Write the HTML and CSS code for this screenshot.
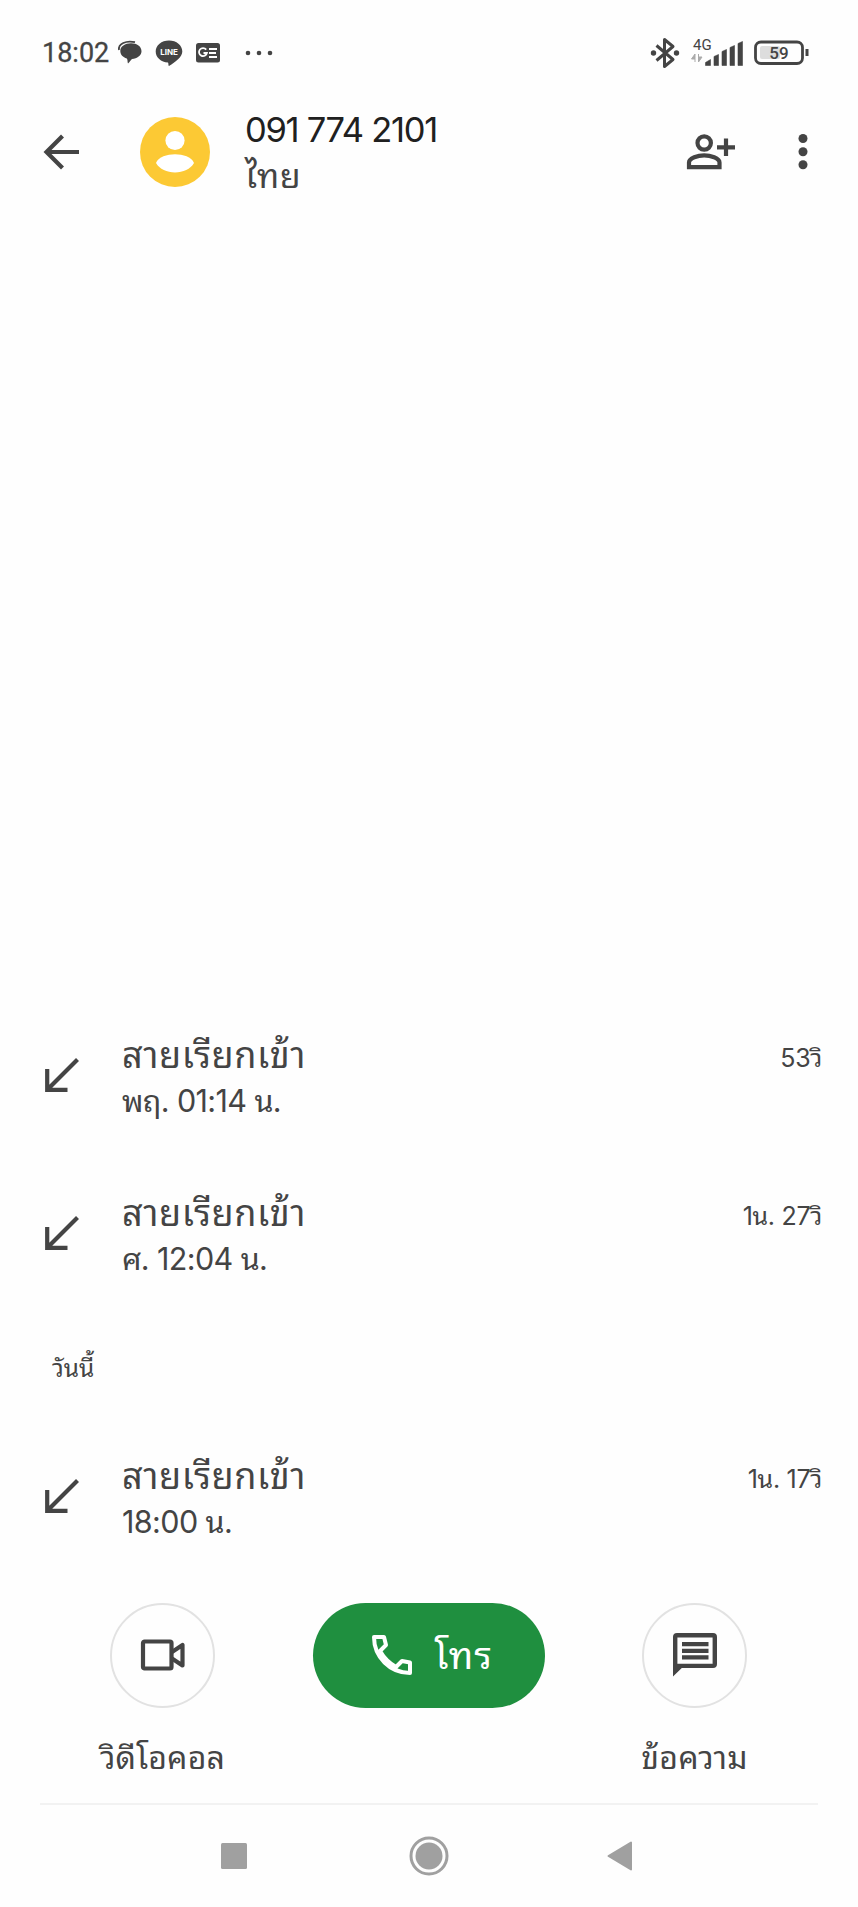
FILE: index.html
```html
<!DOCTYPE html>
<html lang="th">
<head>
<meta charset="utf-8">
<title>091 774 2101</title>
<link rel="stylesheet" href="styles.css">
</head>
<body>
<div class="status">
  <span class="clock">18:02</span>
  <svg class="s-chat" width="24" height="24" viewBox="0 0 24 24"><path d="M1 9C0 3 8-1 17 1.200" fill="none" stroke="#444" stroke-width="1.800"/><path d="M13 2.300C19 2.300 23.500 5.500 23.500 10.300C23.500 14.500 19 17.500 14 18C12.500 19 12 21 10 22.500C9.200 20.500 10 19 8.800 17.400C5 16.500 2.300 13.500 2.300 10C2.300 5.500 7 2.300 13 2.300Z" fill="#444"/></svg>
  <svg class="s-line" width="28" height="28" viewBox="0 0 28 28"><path d="M14 1.500C21.500 1.500 27.300 6.400 27.300 12.500C27.300 18 20.500 23 14 27C13 27 13.800 24.500 13 23.600C6 23.100 .7 18.500 .7 12.500C.7 6.400 6.500 1.500 14 1.500Z" fill="#444"/><text class="line-word" x="14" y="15.500" text-anchor="middle">LINE</text></svg>
  <svg class="s-news" width="24" height="20" viewBox="0 0 24 20"><rect width="24" height="19.500" rx="2.500" fill="#444"/><path d="M10.200 6.600A4 4 0 1 0 10.900 10H7.500M13 6h8M13 10h7M13 14h8" fill="none" stroke="#fff" stroke-width="1.800"/></svg>
  <svg class="s-more" width="28" height="6" viewBox="0 0 28 6" fill="#444"><circle cx="3" cy="3" r="2.300"/><circle cx="14" cy="3" r="2.300"/><circle cx="25" cy="3" r="2.300"/></svg>
  <svg class="s-bt" width="28" height="32" viewBox="0 0 28 32"><path d="M5.500 8.500L22 22.500L13.500 29.500V2.500L22 9.500L5.500 23.500" fill="none" stroke="#444" stroke-width="3" stroke-linejoin="round"/><circle cx="2.500" cy="16" r="2.700" fill="#444"/><circle cx="25.500" cy="16" r="2.700" fill="#444"/></svg>
  <svg class="s-signal" width="54" height="32" viewBox="0 0 54 32"><text class="net" x="3" y="13">4G</text><path d="M5 25v-8l-3.500 5h3.500M8.500 17v8l3.500-5h-3.500" fill="#aaa" stroke="#aaa" stroke-width="1"/><path d="M15.500 28.500V25.500l5-3v6zM24 28.500V19.500l4.500-2v11zM32 28.500V14.500l4.500-2v16zM40 28.500V10.500l4.500-2v20zM48 28.500V6.500l4.500-2v24z" fill="#444" stroke="#444" stroke-width=".6" stroke-linejoin="round"/></svg>
  <svg class="s-batt" width="56" height="26" viewBox="0 0 56 26"><rect x="6" y="6" width="20" height="13" rx="2" fill="#ddd"/><rect x="1.500" y="2" width="47" height="21.500" rx="5.500" fill="none" stroke="#444" stroke-width="2.800"/><path d="M53 9v7" stroke="#444" stroke-width="3"/><text class="batt-num" x="25" y="19" text-anchor="middle">59</text></svg>
</div>

<header class="head">
  <svg class="back" width="36" height="36" viewBox="0 0 36 36"><path d="M35 18H3M18.500 2L2.500 18l16 16" fill="none" stroke="#444" stroke-width="4.200"/></svg>
  <svg class="avatar" width="70" height="70" viewBox="0 0 70 70"><circle cx="35" cy="35" r="35" fill="#fcc934"/><circle cx="35" cy="23.500" r="9.600" fill="#fff"/><path d="M16 46C18.500 40 27 37.300 35 37.300S51.500 40 54 46C50.500 52 43 55.500 35 55.500S19.500 52 16 46Z" fill="#fff"/></svg>
  <div class="who"><div class="number">091 774 2101</div><div class="country">ไทย</div></div>
  <svg class="add" width="50" height="38" viewBox="0 0 50 38" fill="none" stroke="#444" stroke-width="4.200"><circle cx="18.200" cy="10" r="6.700"/><path d="M3 34.200V29.500C3 25 12 22.300 18.200 22.300S33.500 25 33.500 29.500V34.200ZM31 14.300H49M40 5.500V23"/></svg>
  <svg class="menu" width="10" height="38" viewBox="0 0 10 38" fill="#444"><circle cx="5" cy="5.500" r="4.500"/><circle cx="5" cy="18.700" r="4.500"/><circle cx="5" cy="31.800" r="4.500"/></svg>
</header>

<main class="log">
  <section class="call">
    <svg class="in" width="34" height="34" viewBox="0 0 34 34"><path d="M32.500 1.500L3 31M2.200 11V31.800H22.500" fill="none" stroke="#444" stroke-width="4.200"/></svg>
    <div class="info"><div class="kind">สายเรียกเข้า</div><div class="when">พฤ. 01:14 น.</div></div>
    <div class="dur">53วิ</div>
  </section>
  <section class="call">
    <svg class="in" width="34" height="34" viewBox="0 0 34 34"><path d="M32.500 1.500L3 31M2.200 11V31.800H22.500" fill="none" stroke="#444" stroke-width="4.200"/></svg>
    <div class="info"><div class="kind">สายเรียกเข้า</div><div class="when">ศ. 12:04 น.</div></div>
    <div class="dur">1น. 27วิ</div>
  </section>
  <h2 class="today">วันนี้</h2>
  <section class="call">
    <svg class="in" width="34" height="34" viewBox="0 0 34 34"><path d="M32.500 1.500L3 31M2.200 11V31.800H22.500" fill="none" stroke="#444" stroke-width="4.200"/></svg>
    <div class="info"><div class="kind">สายเรียกเข้า</div><div class="when">18:00 น.</div></div>
    <div class="dur">1น. 17วิ</div>
  </section>
</main>

<div class="actions">
  <div class="action">
    <div class="round"><svg width="44" height="32" viewBox="0 0 44 32" fill="none" stroke="#444" stroke-width="4.200" stroke-linejoin="round"><rect x="2" y="2.500" width="28.500" height="27" rx="1.500"/><path d="M31 13L41.500 6V26.500L31 19.500"/></svg></div>
    <div class="label">วิดีโอคอล</div>
  </div>
  <div class="dial">
    <svg width="40" height="40" viewBox="0 0 40 40" fill="none" stroke="#fff" stroke-width="4" stroke-linejoin="round"><path d="M2 2H12L14 10L8 16C12 23 17 28 24 32L30 26L38 27.500V38C18 38 2 22 2 2Z"/></svg>
    <span class="dial-word">โทร</span>
  </div>
  <div class="action">
    <div class="round"><svg width="44" height="44" viewBox="0 0 44 44"><path d="M4 0H40A4 4 0 0 1 44 4V31A4 4 0 0 1 40 35H8.800L0 43.500V4A4 4 0 0 1 4 0ZM4.400 4.400V30.700H39.600V4.400Z" fill="#444" fill-rule="evenodd"/><path d="M9 11.200H35.500M9 17.800H35.500M9 24.300H35.500" stroke="#444" stroke-width="4.200"/></svg></div>
    <div class="label">ข้อความ</div>
  </div>
</div>

<nav class="nav">
  <svg width="26" height="26" viewBox="0 0 26 26"><rect width="26" height="26" rx="1.500" fill="#a0a0a0"/></svg>
  <svg class="home" width="40" height="40" viewBox="0 0 40 40"><circle cx="20" cy="20" r="18" fill="none" stroke="#a0a0a0" stroke-width="3"/><circle cx="20" cy="20" r="13.500" fill="#a0a0a0"/></svg>
  <svg width="26" height="30" viewBox="0 0 26 30"><path d="M24 1.500V28.500L1.500 15Z" fill="#a0a0a0" stroke="#a0a0a0" stroke-width="2" stroke-linejoin="round"/></svg>
</nav>
</body>
</html>
```
FILE: styles.css
```css
* { box-sizing: border-box; }
body {
  margin: 0;
  width: 858px;
  height: 1907px;
  background: #fefefe;
  color: #444;
  font-family: Inter, "Noto Sans Thai Looped", Loma, Waree, Garuda, "Noto Sans Thai", "Noto Sans", sans-serif;
  display: flex;
  flex-direction: column;
  overflow: hidden;
}
svg { display: block; flex: none; overflow: visible; }
div, span, h2 { white-space: nowrap; }

.status { height: 104px; padding: 2px 48px 0 42px; display: flex; align-items: center; }
.clock { font: 400 27px/32px Roboto, sans-serif; width: 76px; padding-top: 1px; -webkit-text-stroke: 0.3px #444; }
.s-line { margin-left: 13px; }
.s-news { margin-left: 13px; }
.s-more { margin-left: 25px; }
.s-bt { margin-left: auto; }
.s-signal { margin-left: 11px; }
.s-batt { margin-left: 10px; }
.line-word { font: 700 8px Inter, sans-serif; fill: #fff; }
.net { font: 400 15px Roboto, sans-serif; fill: #444; }
.batt-num { font: 500 17px Roboto, sans-serif; fill: #444; }

.head { height: 96px; padding: 0 50px 0 44px; display: flex; align-items: center; }
.avatar { margin-left: 60px; }
.who { margin-left: 35px; padding-top: 2px; }
.number { font-size: 34.5px; line-height: 46px; letter-spacing: -1.3px; color: #202020; }
.country { font-size: 34px; line-height: 46px; letter-spacing: 0.5px; }
.add { margin-left: auto; }
.menu { margin-left: 62px; }

.log { flex: none; margin-top: 820px; padding: 0 36px 0 45px; }
.call { height: 158px; display: flex; align-items: flex-start; }
.in { margin-top: 38px; }
.info { margin-left: 43px; padding-top: 12px; }
.kind { font-size: 36px; line-height: 46px; letter-spacing: 0.6px; }
.when { font-size: 30.5px; line-height: 46px; letter-spacing: -0.6px; }
.dur { margin-left: auto; padding-top: 18px; font-size: 25px; line-height: 40px; letter-spacing: -0.3px; }
.today { margin: 0 0 0 7px; height: 105px; padding-top: 12px; font-size: 24.5px; line-height: 40px; font-weight: 400; }

.actions { margin-top: 4px; height: 201px; padding: 0 111px 0 110px; display: flex; justify-content: space-between; align-items: flex-start; }
.action { width: 105px; display: flex; flex-direction: column; align-items: center; }
.round { width: 105px; height: 105px; border: 2px solid #e2e2e2; border-radius: 50%; display: flex; align-items: center; justify-content: center; }
.label { margin-top: 27px; font-size: 32px; line-height: 46px; letter-spacing: 0.2px; }
.dial { width: 232px; height: 105px; border-radius: 53px; background: #1f8f3f; color: #fff; display: flex; align-items: center; padding-left: 59px; }
.dial-word { margin-left: 23px; padding-top: 2px; font-size: 37.5px; line-height: 46px; letter-spacing: 1px; }

.nav { margin: 0 40px; height: 104px; border-top: 2px solid #f2f2f2; padding: 0 185px 0 181px; display: flex; align-items: center; justify-content: space-between; }
.home { margin-left: 3px; }
```
